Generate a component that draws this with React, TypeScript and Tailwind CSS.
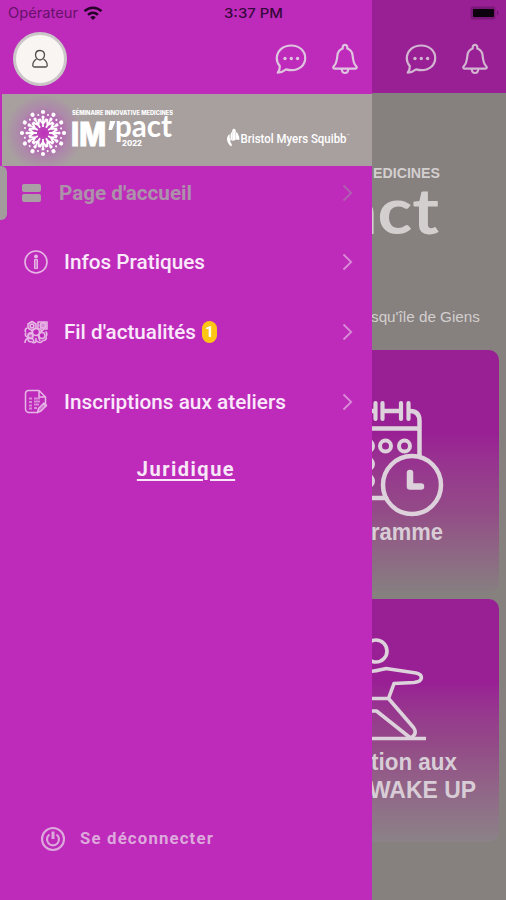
import React from "react";

const MENU = [
  { name: "Infos Pratiques", icon: InfoIcon, badge: 0, width: 141 },
  { name: "Fil d'actualités", icon: NewsIcon, badge: 1, width: 132 },
  { name: "Inscriptions aux ateliers", icon: FormIcon, badge: 0, width: 222 },
];

// One line of text fitted to a fixed width
function Label({
  text,
  width,
  height,
  size,
  base,
  className,
}: {
  text: string;
  width: number;
  height: number;
  size: number;
  base: number;
  className: string;
}) {
  return (
    <svg width={width} height={height} className={`shrink-0 overflow-visible ${className}`} fill="currentColor">
      <text x="0" y={base} fontSize={size} textLength={width} lengthAdjust="spacingAndGlyphs">
        {text}
      </text>
    </svg>
  );
}

function ChatIcon() {
  return (
    <svg width="32" height="32" viewBox="0 0 32 32" fill="none" stroke="currentColor" strokeWidth="2.200">
      <path d="M4.800 23C2.500 20.400 1.600 18 1.800 14.800 2.300 7.500 8.200 2.500 16.200 2.500S30.200 7.800 30.200 15s-5.700 12.200-13.500 12.200c-2 0-3.900-.3-5.600-.8-2.500 2-5 3-8.300 3.300 1.600-2.200 2.200-4.200 2-6.700Z" strokeLinejoin="round" />
      <g fill="currentColor" stroke="none">
        <circle cx="10" cy="15.500" r="1.700" />
        <circle cx="16.300" cy="15.500" r="1.700" />
        <circle cx="22.600" cy="15.500" r="1.700" />
      </g>
    </svg>
  );
}

function BellIcon() {
  return (
    <svg width="26" height="32" viewBox="0 0 26 32" fill="none" stroke="currentColor" strokeWidth="2.200" strokeLinejoin="round">
      <path d="M10.700 5.500V4.200a2.300 2.300 0 0 1 4.600 0v1.300c3.500 1.200 5 3.500 5.300 7 .5 5.500 1 8.500 3.600 10.700 1 .9.700 2.400-.8 2.400H2.600c-1.500 0-1.800-1.500-.8-2.400 2.600-2.200 3.100-5.200 3.600-10.700.3-3.500 1.800-5.800 5.300-7Z" />
      <path d="M9.800 26c0 2.500 1.200 4 3.200 4s3.200-1.500 3.200-4" />
    </svg>
  );
}

function HeaderIcons() {
  return (
    <div className="flex items-start gap-[25px]">
      <ChatIcon />
      <BellIcon />
    </div>
  );
}

function InfoIcon() {
  return (
    <svg width="26" height="26" viewBox="0 0 26 26" fill="none" stroke="currentColor">
      <circle cx="13" cy="13" r="11" strokeWidth="1.600" />
      <circle cx="13" cy="7.500" r="2" fill="currentColor" stroke="none" />
      <path d="M11.500 10.500h3v9h-3z" fill="currentColor" fillOpacity=".6" strokeWidth="1" />
    </svg>
  );
}

function NewsIcon() {
  return (
    <svg width="26" height="26" viewBox="0 0 26 26" fill="none" stroke="currentColor" strokeWidth="1.600" strokeLinejoin="round">
      <path d="M4 9c-2 1-2.500 3-1 4.500M3 13.500c-1.500 2-.5 4 1.500 4.500M5 18c-1 3 1 5.500 3.500 4.500M8.500 22.500c2 2 4 1.500 5-.5M14 22c2 2.500 5 1.500 5.500-.5M19.500 21.500c3 .5 4.500-2 3.500-4M23 17.500c1.500-2 1-4-.5-5" />
      <path d="M5 9V5l4-2.500L13 5v4L9 11.500ZM15 3h9v7h-3l-3 3v-3h-3Z" />
      <circle cx="9" cy="7" r="1.900" />
      <circle cx="20" cy="6.500" r="2.800" fill="currentColor" fillOpacity=".7" />
      <circle cx="13" cy="13" r="3.500" />
      <circle cx="19" cy="16.500" r="3" />
      <circle cx="7.500" cy="17" r="2.600" fill="currentColor" fillOpacity=".4" />
      <path d="M2 24c0-4 2-5 5-5s4 2 4 5M13 23v-4M9 13l-4 2M15 16l2 6" />
    </svg>
  );
}

function FormIcon() {
  return (
    <svg width="26" height="26" viewBox="0 0 26 26" fill="none" stroke="currentColor" strokeWidth="1.500" strokeLinejoin="round">
      <path d="M15 23.500H6a3.500 3.500 0 0 1-3.500-3.500V4.500a3 3 0 0 1 3-3H16l6.500 6.500v10M16 1.500V8h6.500" />
      <path d="M6 9.500h3M11 9.500h6M6 13h3M11 12.500h6M6 16.500h3M11 15.500h5M6 19.500h3M11 19h3" strokeWidth="2" strokeOpacity=".7" />
      <path d="m14.500 23.500 1-4 5.500-5.500 2.500 2.500-5.500 5.500Z" fill="currentColor" fillOpacity=".55" />
    </svg>
  );
}

function Chevron({ className }: { className: string }) {
  return (
    <svg width="12" height="18" viewBox="0 0 12 18" fill="none" stroke="currentColor" strokeWidth="1.800" className={className}>
      <path d="m1.500 1.500 7.700 7.500-7.700 7.500" />
    </svg>
  );
}

const RAYS = [0, 30, 60, 90, 120, 150, 180, 210, 240, 270, 300, 330];

function Burst() {
  return (
    <svg width="50" height="50" viewBox="-25 -25 50 50" className="shrink-0 text-white" fill="currentColor" stroke="currentColor">
      {RAYS.map((angle) => (
        <g key={angle} transform={`rotate(${angle})`}>
          <path d="M0-6v-10M0-9l-2.500-3.500M0-9l2.500-3.500" strokeWidth="1.800" fill="none" />
          <circle cx="0" cy="-16" r="1.600" stroke="none" />
          <circle cx="0" cy="-21" r="2.100" stroke="none" />
          <circle cx="-2.900" cy="-13.200" r="1.400" stroke="none" />
          <circle cx="2.900" cy="-13.200" r="1.400" stroke="none" />
          <circle cx="5" cy="-18" r="1" stroke="none" />
        </g>
      ))}
    </svg>
  );
}

function Banner() {
  return (
    <div className="ml-[2px] mt-px flex h-[72px] justify-between bg-[#a8a09f] bg-[radial-gradient(circle_at_42px_39px,#c02fbc_0px,#b760b5_14px,#ad88aa_25px,#a8a09f_39px)] text-white">
      <div className="flex">
        <div className="pl-4 pt-[14px]">
          <Burst />
        </div>
        <svg width="106" height="60" className="ml-[3px]" fill="currentColor">
          <text x="1" y="20.500" fontSize="5.500" fontWeight="800" fontFamily="Inter, sans-serif" textLength="101" lengthAdjust="spacingAndGlyphs">
            SÉMINAIRE INNOVATIVE MEDICINES
          </text>
          <text x="0" y="51.500" fontSize="32" fontWeight="800" fontFamily="Inter, sans-serif" stroke="currentColor" strokeWidth=".9" textLength="35" lengthAdjust="spacingAndGlyphs">
            IM
          </text>
          <path d="M39 27h5.500L41 36h-3.500Z" />
          <text x="44" y="43" fontSize="30" fontWeight="700" fontFamily="Lato, sans-serif" textLength="57" lengthAdjust="spacingAndGlyphs">
            pact
          </text>
          <text x="51" y="52" fontSize="7.500" fontWeight="800" fontFamily="Inter, sans-serif" textLength="20" lengthAdjust="spacingAndGlyphs">
            2022
          </text>
        </svg>
      </div>
      <div className="flex pr-[21px] pt-[34px]">
        <svg width="14" height="20" viewBox="0 0 14 20" fill="currentColor">
          <path d="M4.500 6 6 3.500v9L4.500 11ZM6.200 2 8 .5 9.700 2v10l-3.500 1ZM10 4l1.500 1 1.800 4v3l-3.300-.5Z" />
          <path d="M3.500 6C0 9 0 14 5 18.500L6 17l-2-4 1.500-1.500L4 11Z" />
        </svg>
        <svg width="111" height="22" fill="currentColor" fontFamily="Roboto, sans-serif">
          <text x="0.500" y="15" fontSize="13" fontWeight="500" textLength="106" lengthAdjust="spacingAndGlyphs">
            Bristol Myers Squibb
          </text>
          <text x="107" y="9" fontSize="4">
            ™
          </text>
        </svg>
      </div>
    </div>
  );
}

function Drawer() {
  return (
    <aside className="flex h-full w-[372px] shrink-0 flex-col bg-[#be2bba]">
      <div className="flex h-[26px] items-center pl-2 text-[#35083a]">
        <Label text="Opérateur" width={70} height={18} size={14} base={14} className="font-['Inter',sans-serif] text-[#66116a]" />
        <svg width="20" height="15" viewBox="0 0 20 15" fill="none" stroke="#240326" strokeWidth="2.500" className="ml-[5px]">
          <path d="M1.500 5.200c5-4.700 12-4.700 17 0M5 8.900c3-2.800 7-2.800 10 0" />
          <path d="M7.200 11.200c1.700-1.500 3.900-1.500 5.600 0L10 14Z" fill="#240326" stroke="none" />
        </svg>
        <Label text="3:37 PM" width={59} height={18} size={13.5} base={14} className="ml-[121px] font-['Inter',sans-serif] font-medium" />
      </div>

      <div className="flex h-[67px] justify-between pl-[13px] pr-[14px]">
        <div className="mt-[6px] flex size-[54px] items-center justify-center rounded-full border-[3px] border-[#cbc6c7] bg-[#f8f5f3]">
          <svg width="18" height="20" viewBox="0 0 18 20" fill="none" stroke="#514d4d" strokeWidth="1.300">
            <path d="M9 1.500c-3 0-4.500 2-4.500 4.500S6.500 11 9 11s4.500-2.500 4.500-5S12 1.500 9 1.500Z" />
            <path d="M5.500 10C3 11.500 1.800 13.500 1.800 16.500c0 1 .5 1.500 1.500 1.500h11.400c1 0 1.500-.5 1.500-1.500 0-3-1.200-5-3.700-6.500" />
          </svg>
        </div>
        <div className="pt-[17px] text-[#dfc4df]">
          <HeaderIcons />
        </div>
      </div>

      <Banner />

      <nav className="flex flex-col">
        <div className="flex h-[54px] items-center">
          <div className="h-[54px] w-[7px] rounded-r-md bg-[#a39c9d]" />
          <div className="ml-[15px] flex flex-col gap-[2px]">
            <div className="h-[8px] w-[19px] rounded-[2px] bg-[#a99fa4]" />
            <div className="h-[8px] w-[19px] rounded-[2px] bg-[#a99fa4]" />
          </div>
          <Label text="Page d'accueil" width={133} height={26} size={20} base={19.5} className="ml-[18px] font-['Roboto',sans-serif] font-bold text-[#ad91ab]" />
          <Chevron className="ml-auto mr-[18px] text-[#b05fb0]" />
        </div>
        <div className="flex flex-col pt-[7px]">
          {MENU.map(({ name, icon: Icon, badge, width }) => (
            <div key={name} className="flex h-[70px] items-center pl-[23px] text-[#e6b6e5]">
              <Icon />
              <Label text={name} width={width} height={26} size={20} base={20} className="ml-[15px] font-['Roboto',sans-serif] font-medium text-[#fae9fa]" />
              {badge > 0 && (
                <span className="ml-[6px] flex h-[22px] w-[15px] items-center justify-center rounded-full bg-[#fdc514] font-['Roboto',sans-serif] text-[15px] font-bold text-white">
                  {badge}
                </span>
              )}
              <Chevron className="ml-auto mr-[18px] text-[#d88bd6]" />
            </div>
          ))}
        </div>
        <div className="flex h-[64px] justify-center pt-[20px] font-['Roboto',sans-serif] text-[20px] font-bold leading-6 tracking-[1.5px] text-[#f7e7f7] underline decoration-[1.5px] underline-offset-[3px]">
          Juridique
        </div>
      </nav>

      <div className="mt-auto flex h-[74px] items-start pl-[40px] text-[#dda9dc]">
        <svg width="26" height="26" viewBox="0 0 26 26" fill="none" stroke="currentColor" strokeWidth="2.100">
          <circle cx="13" cy="13" r="11" />
          <path d="M9.500 8.500a6 6 0 1 0 7 0" />
          <path d="M13 5.500v7.500" strokeWidth="3" />
        </svg>
        <Label text="Se déconnecter" width={134} height={26} size={17} base={18} className="ml-[14px] font-['Roboto',sans-serif] font-bold tracking-[1.200px]" />
      </div>
    </aside>
  );
}

function CalendarIcon() {
  return (
    <svg width="128" height="124" viewBox="372 396 128 124" fill="none" stroke="#ddd2dc" strokeWidth="4.500" strokeLinecap="round">
      <path d="M362 411h12M384 411h15M410 411c7 0 9.500 4 9.500 10v35M362 428.500h57" />
      <path d="M375.500 403v16M382.500 403v16M401 403v16M408.500 403v16" strokeWidth="4.200" />
      <path d="M362 498h24" />
      <circle cx="385.500" cy="446" r="5.500" strokeWidth="4" />
      <circle cx="404.500" cy="446" r="5.500" strokeWidth="4" />
      <circle cx="367.500" cy="446" r="5.500" strokeWidth="4" />
      <circle cx="367.500" cy="464" r="5.500" strokeWidth="4" />
      <circle cx="367.500" cy="481" r="5.500" strokeWidth="4" />
      <circle cx="412" cy="485" r="29" />
      <path d="M410 473v13.500h11" strokeWidth="6.500" strokeLinejoin="round" />
    </svg>
  );
}

function StretchIcon() {
  return (
    <svg width="128" height="110" viewBox="372 635 128 110" fill="none" stroke="#ddd2dc" strokeWidth="3.600" strokeLinejoin="round">
      <circle cx="376" cy="651" r="11" />
      <path d="M365 671c8 1.500 14-1 21-2.500l30 4.500c7 1.500 8 8.500-2 9.500l-20 1-5.500 15h-24" />
      <path d="m388.500 698.500 25 29c3 4 2 8-3 10.500l-34-27h-12" />
      <path d="M362 738.500h64" />
    </svg>
  );
}

function Home() {
  return (
    <main className="flex h-full w-[134px] flex-col overflow-hidden bg-[#86807f]">
      <div className="flex h-[93px] shrink-0 flex-col bg-[#992094]">
        <div className="flex h-[26px] items-center justify-end pr-[7px]">
          <svg width="29" height="14" viewBox="0 0 29 14">
            <rect x=".5" y=".5" width="25" height="13" rx="3" fill="#7a1878" />
            <rect x="3" y="3" width="21" height="8" rx="1" fill="#0c010c" />
            <path d="M27 4.500c1.800.5 1.800 4.500 0 5Z" fill="#6a1469" />
          </svg>
        </div>
        <div className="flex justify-end pr-[18px] pt-[17px] text-[#d2b5d1]">
          <HeaderIcons />
        </div>
      </div>

      <div className="flex h-[257px] shrink-0 flex-col items-end text-[#d3cfce]">
        <Label text="EDICINES" width={67} height={20} size={14.5} base={15} className="mr-[66px] mt-[70px] font-['Liberation_Sans',sans-serif] font-bold" />
        <Label text="act" width={98} height={64} size={64} base={51} className="mr-[67px] font-['Lato',sans-serif] font-bold" />
        <Label text="squ'île de Giens" width={109} height={20} size={15} base={15} className="mr-[26px] mt-[60px] font-['Liberation_Sans',sans-serif]" />
      </div>

      <section className="flex h-[242px] w-[127px] shrink-0 flex-col rounded-r-[10px] bg-linear-to-b from-[#992094] from-35% via-[#934a87] via-66% to-[#867e80] font-['Liberation_Sans',sans-serif] font-bold text-[#d8cdd6]">
        <div className="pt-[46px]">
          <CalendarIcon />
        </div>
        <div className="flex justify-end pr-[56px]">
          <Label text="ramme" width={72} height={26} size={23} base={20} className="" />
        </div>
      </section>

      <section className="mt-[7px] flex h-[243px] w-[127px] shrink-0 flex-col rounded-r-[10px] bg-linear-to-b from-[#992094] from-35% via-[#934a87] via-60% to-[#8b8287] font-['Liberation_Sans',sans-serif] font-bold text-[#d8cdd6]">
        <div className="pt-[36px]">
          <StretchIcon />
        </div>
        <div className="flex flex-col items-end">
          <Label text="tion aux" width={86} height={27} size={23} base={25} className="mr-[42px]" />
          <Label text="WAKE UP" width={107} height={27} size={23} base={26} className="mr-[23px]" />
        </div>
      </section>
    </main>
  );
}

export default function App() {
  return (
    <div className="flex h-[900px] w-[506px] overflow-hidden">
      <Drawer />
      <Home />
    </div>
  );
}
